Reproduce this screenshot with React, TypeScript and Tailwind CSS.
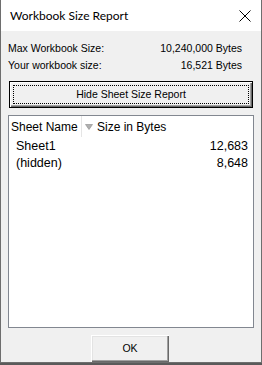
import React from "react";

const rows = [
  { name: "Sheet1", size: "12,683" },
  { name: "(hidden)", size: "8,648" },
];

export default function App() {
  return (
    <div className="w-[262px] h-[365px] bg-[#5a5a5a]">
      <div className="w-[262px] h-[363px] flex flex-col border-x border-b border-[#6e6e6e] bg-[#f0f0f0]">
        {/* title bar */}
        <div className="h-[31px] bg-white flex items-center justify-between pl-[9px] pr-[10px] shrink-0">
          <span className="text-[12px] text-black font-['Lato',sans-serif] leading-none pt-[1px]">
            Workbook Size Report
          </span>
          <svg width="12" height="12" viewBox="0 0 12 12" className="mt-[1px]">
            <path d="M0.5 0.5 L11.5 11.5 M11.5 0.5 L0.5 11.5" stroke="#000" strokeWidth="1" />
          </svg>
        </div>

        {/* body */}
        <div className="flex-1 flex flex-col px-[7px] pt-[9px] font-['Liberation_Sans',Arial,sans-serif] text-[10.5px] text-black">
          <div className="flex justify-between h-[17px] items-center pr-[12px]">
            <span>Max Workbook Size:</span>
            <span>10,240,000 Bytes</span>
          </div>
          <div className="flex justify-between h-[17px] items-center pr-[12px]">
            <span>Your workbook size:</span>
            <span>16,521 Bytes</span>
          </div>

          <button className="mt-[7px] ml-[1px] w-[244px] h-[27px] flex border border-black bg-[#f0f0f0] p-[3px] shadow-[inset_1px_1px_0_#ffffff,inset_-1px_-1px_0_#696969,inset_-2px_-2px_0_#a0a0a0]">
            <span className="flex-1 flex items-center justify-center border border-dotted border-black">
              Hide Sheet Size Report
            </span>
          </button>

          <div className="mt-[7px] w-[246px] h-[213px] border border-[#828790] bg-white text-[12px] font-['Liberation_Sans',Arial,sans-serif]">
            <div className="flex h-[21px] items-center">
              <div className="w-[73px] shrink-0 pl-[2px] h-full flex items-center whitespace-nowrap border-r border-[#e5e5e5]">
                Sheet Name
              </div>
              <div className="flex items-center pl-[3px] h-full whitespace-nowrap">
                <svg width="8" height="6" viewBox="0 0 8 6" className="mr-[4px] mt-[1px]">
                  <path d="M0.5 0.5 L7.5 0.5 L4 5.5 Z" fill="#b0b0b0" stroke="#8a8a8a" strokeWidth="0.6" />
                </svg>
                Size in Bytes
              </div>
            </div>
            <div className="pt-[1px] text-[12.5px]">
              {rows.map((r) => (
                <div key={r.name} className="flex justify-between h-[17px] items-center pl-[7px] pr-[5px]">
                  <span>{r.name}</span>
                  <span>{r.size}</span>
                </div>
              ))}
            </div>
          </div>

          <div className="flex justify-center mt-[7px] pr-[2px]">
            <button className="w-[78px] h-[27px] bg-[#f0f0f0] flex items-center justify-center shadow-[inset_1px_1px_0_#ffffff,inset_-1px_-1px_0_#696969,inset_-2px_-2px_0_#a0a0a0,inset_2px_2px_0_#e3e3e3]">
              OK
            </button>
          </div>
        </div>
      </div>
    </div>
  );
}
